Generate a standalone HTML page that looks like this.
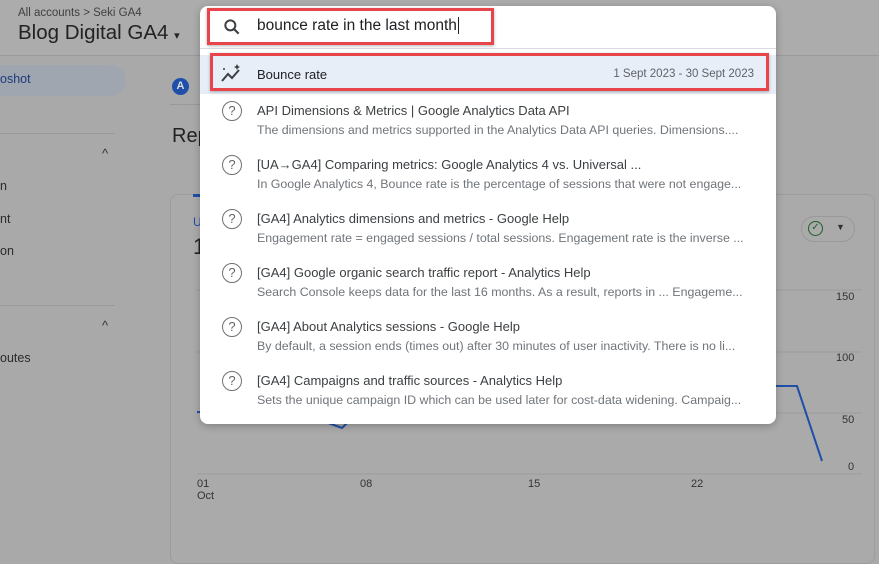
<!DOCTYPE html>
<html><head><meta charset="utf-8"><style>
*{margin:0;padding:0;box-sizing:border-box}
body{width:879px;height:553px;overflow:hidden;background:#a9a9a9;font-family:"Liberation Sans",Arial,sans-serif;position:relative;color:#2b2b2b}
.a{position:absolute;white-space:nowrap}
.pop{position:absolute;left:200px;top:6px;width:576px;height:418px;background:#fff;border-radius:8px;box-shadow:0 2px 8px rgba(0,0,0,.25);overflow:hidden}
.t{font-size:13px;color:#3c4043;left:57px}
.d{font-size:12.4px;color:#70757a;left:57px}
.q{left:22px;width:20px;height:20px;border:1.6px solid #707070;border-radius:50%;font-size:13px;color:#666;text-align:center;line-height:17px}
</style></head><body>
<div class="a" style="left:0;top:0;width:879px;height:56px;background:#acacac;border-bottom:1px solid #9a9a9a"></div>
<div class="a" style="left:18px;top:7px;font-size:11.5px;color:#404040">All accounts &gt; Seki GA4</div>
<div class="a" style="left:18px;top:21px;font-size:20.5px;color:#222">Blog Digital GA4 <span style="font-size:11px">▾</span></div>
<div class="a" style="left:0;top:65px;width:126px;height:31px;background:#a0a6b0;border-radius:0 16px 16px 0"></div>
<div class="a" style="left:0;top:72px;font-size:12.5px;color:#1b3a78">oshot</div>
<div class="a" style="left:172px;top:78px;width:17px;height:17px;border-radius:50%;background:#1f4fa8;color:#ddd;font-size:11px;font-weight:bold;text-align:center;line-height:17px">A</div>
<div class="a" style="left:170px;top:104px;width:40px;border-top:1px solid #999"></div>
<div class="a" style="left:172px;top:125px;font-size:20px;color:#222">Rep</div>
<div class="a" style="left:0;top:133px;width:115px;border-top:1px solid #999"></div>
<div class="a" style="left:0;top:305px;width:115px;border-top:1px solid #999"></div>
<div class="a" style="left:102px;top:146px;font-size:13px;color:#333">^</div>
<div class="a" style="left:102px;top:318px;font-size:13px;color:#333">^</div>
<div class="a" style="left:0;top:179px;font-size:12.5px;color:#2b2b2b">n</div>
<div class="a" style="left:0;top:212px;font-size:12.5px;color:#2b2b2b">nt</div>
<div class="a" style="left:0;top:244px;font-size:12.5px;color:#2b2b2b">on</div>
<div class="a" style="left:0;top:351px;font-size:12.5px;color:#2b2b2b">outes</div>
<div class="a" style="left:170px;top:194px;width:705px;height:370px;border:1px solid #9c9c9c;border-radius:8px;background:#aaaaaa"></div>
<div class="a" style="left:193px;top:194px;width:12px;height:3px;background:#1f4fa8"></div>
<div class="a" style="left:193px;top:215px;font-size:12px;color:#1f4fa8">U</div>
<div class="a" style="left:193px;top:234px;font-size:22px;color:#222">1</div>
<div class="a" style="left:801px;top:216px;width:54px;height:26px;border:1px solid #999;border-radius:13px"></div>
<div class="a" style="left:808px;top:221px;width:15px;height:15px;border:1.8px solid #1d5e2a;border-radius:50%;font-size:10px;color:#1d5e2a;text-align:center;line-height:12px">✓</div>
<div class="a" style="left:836px;top:222px;font-size:9px;color:#333">▼</div>
<svg class="a" style="left:0;top:0" width="879" height="553">
<g stroke="#9c9c9c" stroke-width="1"><line x1="197" y1="290" x2="862" y2="290"/><line x1="197" y1="352" x2="862" y2="352"/><line x1="197" y1="413" x2="862" y2="413"/><line x1="197" y1="474" x2="862" y2="474"/></g>
<polyline points="197,412 200,412 320,420 342,428 350,420" fill="none" stroke="#1f4fa8" stroke-width="2"/>
<polyline points="770,386 797,386 822,461" fill="none" stroke="#1f4fa8" stroke-width="2"/>
</svg>
<div class="a" style="left:836px;top:291px;font-size:11px;color:#333">150</div>
<div class="a" style="left:836px;top:352px;font-size:11px;color:#333">100</div>
<div class="a" style="left:842px;top:414px;font-size:11px;color:#333">50</div>
<div class="a" style="left:848px;top:461px;font-size:11px;color:#333">0</div>
<div class="a" style="left:197px;top:478px;font-size:11px;color:#333;line-height:12px">01<br>Oct</div>
<div class="a" style="left:360px;top:478px;font-size:11px;color:#333">08</div>
<div class="a" style="left:528px;top:478px;font-size:11px;color:#333">15</div>
<div class="a" style="left:691px;top:478px;font-size:11px;color:#333">22</div>
<div class="pop">
<svg class="a" style="left:22px;top:11px" width="20" height="20" viewBox="0 0 24 24"><circle cx="10" cy="10" r="6" fill="none" stroke="#3c4043" stroke-width="2.4"/><line x1="14.5" y1="14.5" x2="20" y2="20" stroke="#3c4043" stroke-width="2.6"/></svg>
<div class="a" style="left:57px;top:11px;font-size:15.5px;color:#202124">bounce rate in the last month<span style="border-left:1px solid #202124;margin-left:1px"></span></div>
<div class="a" style="left:0;top:42px;width:576px;border-top:1px solid #dadce0"></div>
<div class="a" style="left:0;top:49px;width:576px;height:39px;background:#e8eef8"></div>
<svg class="a" style="left:20px;top:58px" width="22" height="20" viewBox="0 0 22 20"><polyline points="2,17 8,10 12,14 19,6" fill="none" stroke="#3c4043" stroke-width="2"/><path d="M17 0 l1 2 2 1 -2 1 -1 2 -1 -2 -2 -1 2 -1z" fill="#3c4043"/><circle cx="4" cy="5" r="1" fill="#3c4043"/></svg>
<div class="a t" style="top:61px;color:#202124">Bounce rate</div>
<div class="a" style="right:22px;top:62px;font-size:11.5px;color:#5f6368">1 Sept 2023 - 30 Sept 2023</div>
<div class="a q" style="top:95px">?</div>
<div class="a t" style="top:97px">API Dimensions &amp; Metrics | Google Analytics Data API</div>
<div class="a d" style="top:117px">The dimensions and metrics supported in the Analytics Data API queries. Dimensions....</div>
<div class="a q" style="top:149px">?</div>
<div class="a t" style="top:151px">[UA→GA4] Comparing metrics: Google Analytics 4 vs. Universal ...</div>
<div class="a d" style="top:171px">In Google Analytics 4, Bounce rate is the percentage of sessions that were not engage...</div>
<div class="a q" style="top:203px">?</div>
<div class="a t" style="top:205px">[GA4] Analytics dimensions and metrics - Google Help</div>
<div class="a d" style="top:225px">Engagement rate = engaged sessions / total sessions. Engagement rate is the inverse ...</div>
<div class="a q" style="top:257px">?</div>
<div class="a t" style="top:259px">[GA4] Google organic search traffic report - Analytics Help</div>
<div class="a d" style="top:279px">Search Console keeps data for the last 16 months. As a result, reports in ... Engageme...</div>
<div class="a q" style="top:311px">?</div>
<div class="a t" style="top:313px">[GA4] About Analytics sessions - Google Help</div>
<div class="a d" style="top:333px">By default, a session ends (times out) after 30 minutes of user inactivity. There is no li...</div>
<div class="a q" style="top:365px">?</div>
<div class="a t" style="top:367px">[GA4] Campaigns and traffic sources - Analytics Help</div>
<div class="a d" style="top:387px">Sets the unique campaign ID which can be used later for cost-data widening. Campaig...</div>
</div>
<div class="a" style="left:207px;top:8px;width:287px;height:37px;border:3px solid #e8454b;box-shadow:0 1px 3px rgba(0,0,0,.3)"></div>
<div class="a" style="left:210px;top:53px;width:559px;height:38px;border:3px solid #e8454b;box-shadow:0 1px 3px rgba(0,0,0,.3)"></div>
</body></html>
